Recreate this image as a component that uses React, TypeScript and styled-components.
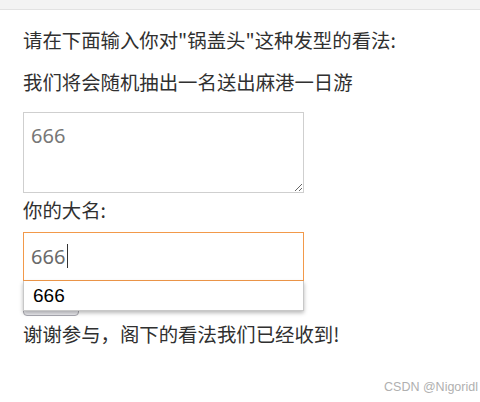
import React from 'react';
import styled, { createGlobalStyle } from 'styled-components';

const GlobalStyle = createGlobalStyle`
  html, body {
    margin: 0;
    padding: 0;
    background: #ffffff;
  }
  body {
    font-family: "Noto Sans CJK SC", "Noto Sans", sans-serif;
    color: #333333;
  }
`;

const Page = styled.div`
  position: relative;
  width: 480px;
  height: 402px;
  overflow: hidden;
`;

const TopBar = styled.div`
  height: 9px;
  background: #f3f3f3;
  border-bottom: 1px solid #e2e2e2;
`;

const Content = styled.div`
  padding: 0 23px;
  display: flex;
  flex-direction: column;
  align-items: flex-start;
`;

const Line = styled.p<{ $top: number }>`
  margin: ${(p) => p.$top}px 0 0;
  font-size: 19.4px;
  line-height: 26px;
  color: #303030;
`;

const TextArea = styled.textarea`
  box-sizing: border-box;
  width: 281px;
  height: 81px;
  margin: 17px 0 0;
  padding: 9px 7px;
  border: 1px solid #cfcfcf;
  font-family: "Noto Sans", "Open Sans", sans-serif;
  font-size: 20px;
  color: #333;
  outline: none;
  display: block;

  &::placeholder {
    color: #777;
  }
`;

const InputWrap = styled.div`
  position: relative;
  margin-top: 9px;
  width: 281px;
`;

const NameInput = styled.input`
  box-sizing: border-box;
  display: block;
  width: 281px;
  height: 49px;
  padding: 0 7px;
  border: 1px solid #f2994a;
  font-family: "Noto Sans", "Open Sans", sans-serif;
  font-size: 20px;
  color: #6a6a6a;
  outline: none;
  background: #fff;
`;

const Caret = styled.span`
  position: absolute;
  left: 44px;
  top: 12px;
  width: 1px;
  height: 24px;
  background: #333;
`;

const Suggest = styled.div`
  position: absolute;
  left: 0;
  top: 49px;
  box-sizing: border-box;
  width: 281px;
  height: 30px;
  padding: 0 9px;
  background: #fff;
  border: 1px solid #c8c8c8;
  border-top: none;
  box-shadow: 0 2px 4px rgba(0, 0, 0, 0.28);
  font-family: "Liberation Sans", Arial, sans-serif;
  font-size: 19px;
  line-height: 30px;
  color: #000;
  z-index: 2;
`;

const Submit = styled.button`
  display: block;
  width: 56px;
  height: 35px;
  margin: 0;
  border: 1px solid #a8a8b0;
  border-radius: 4px;
  background: #e9e9ed;
`;

const Watermark = styled.span`
  position: absolute;
  right: 2px;
  bottom: 8px;
  font-family: "Liberation Sans", Arial, sans-serif;
  font-size: 12.5px;
  color: #b0b0b0;
`;

const App: React.FC = () => {
  return (
    <Page>
      <GlobalStyle />
      <TopBar />
      <Content>
        <Line $top={17}>请在下面输入你对"锅盖头"这种发型的看法:</Line>
        <Line $top={16}>我们将会随机抽出一名送出麻港一日游</Line>
        <TextArea placeholder="666" />
        <Line $top={4}>你的大名:</Line>
        <InputWrap>
          <NameInput value="666" readOnly />
          <Caret />
          <Suggest>666</Suggest>
          <Submit />
        </InputWrap>
        <Line $top={5}>谢谢参与，阁下的看法我们已经收到!</Line>
      </Content>
      <Watermark>CSDN @Nigoridl</Watermark>
    </Page>
  );
};

export default App;
